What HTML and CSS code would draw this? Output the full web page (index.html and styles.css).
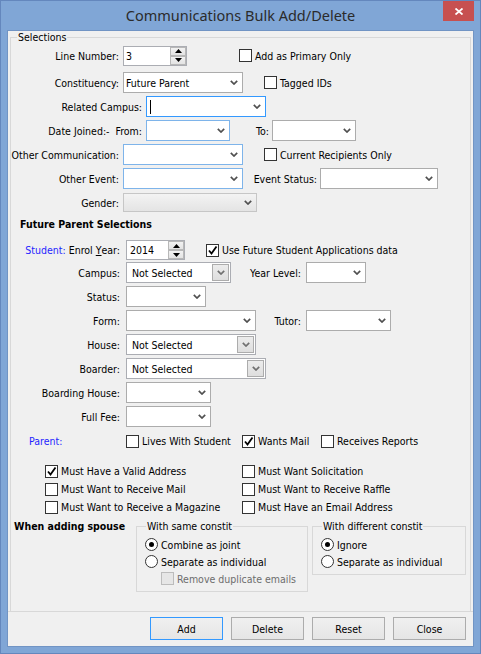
FILE: index.html
```html
<!DOCTYPE html>
<html>
<head>
<meta charset="utf-8">
<link rel="stylesheet" href="styles.css">
</head>
<body>
<div class="window">
  <div class="titlebar">
    <span></span>
    <span class="title">Communications Bulk Add/Delete</span>
    <div class="closecell"><div class="close"><svg width="8" height="7" viewBox="0 0 8 7"><path d="M0.5 0.5 L7.5 6.5 M7.5 0.5 L0.5 6.5" stroke="#fff" stroke-width="1.8" fill="none"/></svg></div></div>
  </div>
  <div class="client">
    <fieldset class="main">
      <legend>Selections</legend>

      <div class="row r1">
        <span class="lbl w108">Line Number:</span>
        <div class="spin w64"><span class="val">3</span><div class="spinbtns"><span class="sb"><svg width="7" height="4" viewBox="0 0 7 4"><path d="M3.5 0 L7 4 L0 4Z"/></svg></span><span class="sb"><svg width="7" height="4" viewBox="0 0 7 4"><path d="M0 0 L7 0 L3.5 4Z"/></svg></span></div></div>
        <span class="chk ml52"><span class="box"></span>Add as Primary Only</span>
      </div>

      <div class="row r2">
        <span class="lbl w108">Constituency:</span>
        <div class="sel w120"><span class="val">Future Parent</span><svg class="chev" width="8" height="5" viewBox="0 0 8 5"><path d="M0.8 0.8 L4 4 L7.2 0.8"/></svg></div>
        <span class="chk ml21"><span class="box"></span>Tagged IDs</span>
      </div>

      <div class="row">
        <span class="lbl w131">Related Campus:</span>
        <div class="sel focus w120"><span class="caret"></span><svg class="chev" width="8" height="5" viewBox="0 0 8 5"><path d="M0.8 0.8 L4 4 L7.2 0.8"/></svg></div>
      </div>

      <div class="row">
        <span class="lbl w131">Date Joined:-&nbsp;&nbsp;From:</span>
        <div class="sel blue w84"><svg class="chev" width="8" height="5" viewBox="0 0 8 5"><path d="M0.8 0.8 L4 4 L7.2 0.8"/></svg></div>
        <span class="lbl w43">To:</span>
        <div class="sel w84"><svg class="chev" width="8" height="5" viewBox="0 0 8 5"><path d="M0.8 0.8 L4 4 L7.2 0.8"/></svg></div>
      </div>

      <div class="row">
        <span class="lbl w108">Other Communication:</span>
        <div class="sel blue w120"><svg class="chev" width="8" height="5" viewBox="0 0 8 5"><path d="M0.8 0.8 L4 4 L7.2 0.8"/></svg></div>
        <span class="chk ml21"><span class="box"></span>Current Recipients Only</span>
      </div>

      <div class="row">
        <span class="lbl w108">Other Event:</span>
        <div class="sel blue w120"><svg class="chev" width="8" height="5" viewBox="0 0 8 5"><path d="M0.8 0.8 L4 4 L7.2 0.8"/></svg></div>
        <span class="lbl w75">Event Status:</span>
        <div class="sel w118"><svg class="chev" width="8" height="5" viewBox="0 0 8 5"><path d="M0.8 0.8 L4 4 L7.2 0.8"/></svg></div>
      </div>

      <div class="row">
        <span class="lbl w108">Gender:</span>
        <div class="sel disabled w134"><svg class="chev" width="8" height="5" viewBox="0 0 8 5"><path d="M0.8 0.8 L4 4 L7.2 0.8"/></svg></div>
      </div>

      <div class="heading">Future Parent Selections</div>

      <div class="row r8">
        <span class="lbl w109"><span class="blue-text">Student:</span>&nbsp;Enrol&nbsp;<u>Y</u>ear:</span>
        <div class="spin w59 c2"><span class="val">2014</span><div class="spinbtns"><span class="sb"><svg width="7" height="4" viewBox="0 0 7 4"><path d="M3.5 0 L7 4 L0 4Z"/></svg></span><span class="sb"><svg width="7" height="4" viewBox="0 0 7 4"><path d="M0 0 L7 0 L3.5 4Z"/></svg></span></div></div>
        <span class="chk ml21"><span class="box"><svg width="11" height="11" viewBox="0 0 11 11"><path d="M2 5.5 L4.5 8.5 L9.5 1.5" stroke="#000" stroke-width="1.8" fill="none"/></svg></span>Use Future Student Applications data</span>
      </div>

      <div class="row r9">
        <span class="lbl w109">Campus:</span>
        <div class="csel w105 c2"><span class="val">Not Selected</span><span class="cbtn"><svg class="chev" width="8" height="5" viewBox="0 0 8 5"><path d="M0.8 0.8 L4 4 L7.2 0.8"/></svg></span></div>
        <span class="lbl w69">Year Level:</span>
        <div class="sel w60 c2"><svg class="chev" width="8" height="5" viewBox="0 0 8 5"><path d="M0.8 0.8 L4 4 L7.2 0.8"/></svg></div>
      </div>

      <div class="row">
        <span class="lbl w109">Status:</span>
        <div class="sel w80 c2"><svg class="chev" width="8" height="5" viewBox="0 0 8 5"><path d="M0.8 0.8 L4 4 L7.2 0.8"/></svg></div>
      </div>

      <div class="row">
        <span class="lbl w109">Form:</span>
        <div class="sel w130 c2"><svg class="chev" width="8" height="5" viewBox="0 0 8 5"><path d="M0.8 0.8 L4 4 L7.2 0.8"/></svg></div>
        <span class="lbl w44">Tutor:</span>
        <div class="sel w85 c2"><svg class="chev" width="8" height="5" viewBox="0 0 8 5"><path d="M0.8 0.8 L4 4 L7.2 0.8"/></svg></div>
      </div>

      <div class="row">
        <span class="lbl w109">House:</span>
        <div class="csel w130 c2"><span class="val">Not Selected</span><span class="cbtn"><svg class="chev" width="8" height="5" viewBox="0 0 8 5"><path d="M0.8 0.8 L4 4 L7.2 0.8"/></svg></span></div>
      </div>

      <div class="row">
        <span class="lbl w109">Boarder:</span>
        <div class="csel w140 c2"><span class="val">Not Selected</span><span class="cbtn"><svg class="chev" width="8" height="5" viewBox="0 0 8 5"><path d="M0.8 0.8 L4 4 L7.2 0.8"/></svg></span></div>
      </div>

      <div class="row">
        <span class="lbl w109">Boarding House:</span>
        <div class="sel w85 c2"><svg class="chev" width="8" height="5" viewBox="0 0 8 5"><path d="M0.8 0.8 L4 4 L7.2 0.8"/></svg></div>
      </div>

      <div class="row">
        <span class="lbl w109">Full Fee:</span>
        <div class="sel w85 c2"><svg class="chev" width="8" height="5" viewBox="0 0 8 5"><path d="M0.8 0.8 L4 4 L7.2 0.8"/></svg></div>
      </div>

      <div class="row parent">
        <span class="plabel blue-text">Parent:</span>
        <span class="chk pw116"><span class="box"></span>Lives With Student</span>
        <span class="chk pw79"><span class="box"><svg width="11" height="11" viewBox="0 0 11 11"><path d="M2 5.5 L4.5 8.5 L9.5 1.5" stroke="#000" stroke-width="1.8" fill="none"/></svg></span>Wants Mail</span>
        <span class="chk"><span class="box"></span>Receives Reports</span>
      </div>

      <div class="must">
        <span class="chk"><span class="box"><svg width="11" height="11" viewBox="0 0 11 11"><path d="M2 5.5 L4.5 8.5 L9.5 1.5" stroke="#000" stroke-width="1.8" fill="none"/></svg></span>Must Have a Valid Address</span>
        <span class="chk"><span class="box"></span>Must Want Solicitation</span>
        <span class="chk"><span class="box"></span>Must Want to Receive Mail</span>
        <span class="chk"><span class="box"></span>Must Want to Receive Raffle</span>
        <span class="chk"><span class="box"></span>Must Want to Receive a Magazine</span>
        <span class="chk"><span class="box"></span>Must Have an Email Address</span>
      </div>

      <div class="spouse">
        <span class="sp-label">When adding spouse</span>
        <fieldset class="sub g1">
          <legend>With same constit</legend>
          <div class="rad first"><span class="radio on"></span>Combine as joint</div>
          <div class="rad"><span class="radio"></span>Separate as individual</div>
          <div class="rad indent"><span class="chk dis"><span class="box"></span>Remove duplicate emails</span></div>
        </fieldset>
        <fieldset class="sub g2">
          <legend>With different constit</legend>
          <div class="rad first"><span class="radio on"></span>Ignore</div>
          <div class="rad"><span class="radio"></span>Separate as individual</div>
        </fieldset>
      </div>
    </fieldset>
    <div class="sep"></div>
    <div class="buttons">
      <button class="btn default">Add</button>
      <button class="btn">Delete</button>
      <button class="btn">Reset</button>
      <button class="btn">Close</button>
    </div>
  </div>
</div>
</body>
</html>
```

FILE: styles.css
```css
html, body {
  margin: 0;
  padding: 0;
  background: #80a6d6;
}
body {
  font-family: "DejaVu Sans Condensed", "Liberation Sans", sans-serif;
  font-size: 10.5px;
  color: #000;
}
.window {
  width: 481px;
  height: 654px;
  box-sizing: border-box;
  background: #80a6d6;
  border: 1px solid #6487bd;
  padding: 0 6px 6px 6px;
  display: flex;
  flex-direction: column;
}
.titlebar {
  height: 29px;
  display: grid;
  grid-template-columns: 1fr auto 1fr;
  align-items: start;
}
.title {
  font-family: "Noto Sans", "Open Sans", sans-serif;
  font-size: 14.5px;
  color: #2b2b2b;
  line-height: 28px;
}
.closecell {
  display: flex;
  justify-content: flex-end;
}
.close {
  width: 31px;
  height: 20px;
  background: #c75050;
  display: flex;
  align-items: center;
  justify-content: center;
}
.client {
  flex: 1;
  background: #f0f0f0;
  border: 1px solid #7194c4;
  display: flex;
  flex-direction: column;
}
fieldset {
  margin: 0;
  padding: 0;
  min-width: 0;
  border: 1px solid #d8d8d8;
}
legend {
  padding: 0 1px;
  line-height: 13px;
}
.main {
  height: 580px;
  box-sizing: border-box;
  margin: 0 2px;
  border-bottom: none;
}
.main > legend {
  margin-left: 6px;
}
.row {
  display: flex;
  align-items: center;
  height: 21px;
  margin-top: 3px;
  white-space: nowrap;
}
.row.r1 { margin-top: 1px; }
.row.r2 { margin-top: 6px; }
.row.r8 { margin-top: 9px; height: 20px; }
.row.r9 { margin-top: 2px; }
.row.parent { margin-top: 4px; height: 20px; }

.lbl {
  display: flex;
  justify-content: flex-end;
  flex: none;
  margin-right: 4px;
  white-space: nowrap;
}
.w108 { width: 108px; }
.w109 { width: 109px; margin-right: 6px; }
.w131 { width: 131px; }
.w43 { width: 39px; margin-right: 3px; }
.w75 { width: 74px; margin-right: 3px; }
.w69 { width: 70px; margin-right: 5px; }
.w44 { width: 45px; margin-right: 5px; }

.ml52 { margin-left: 52px; }
.ml21 { margin-left: 21px; }

.sel, .csel, .spin {
  flex: none;
  box-sizing: border-box;
  height: 21px;
  background: #fff;
  border: 1px solid #acacac;
  display: flex;
  align-items: center;
}
.sel { padding: 0 4px 0 2px; }
.sel .chev { margin-left: auto; }
.chev path {
  fill: none;
  stroke: #505050;
  stroke-width: 1.7;
}
.sel.blue { border-color: #7eb4ea; }
.sel.focus { border-color: #3399ff; }
.sel.disabled {
  height: 19px;
  border-color: #c6c6c6;
  background: linear-gradient(#f3f3f3, #e4e4e4);
}
.caret {
  width: 1px;
  height: 14px;
  background: #000;
  margin-left: 1px;
}
.w120 { width: 120px; }
.w84 { width: 84px; }
.w118 { width: 118px; }
.w134 { width: 134px; }
.w105 { width: 105px; }
.w60 { width: 60px; }
.w80 { width: 80px; }
.w130 { width: 130px; }
.w85 { width: 85px; }
.w140 { width: 140px; }
.w64 { width: 64px; }
.w59 { width: 59px; }

.csel {
  border-color: #abadb3;
  padding: 1px 1px 1px 5px;
  align-items: stretch;
}
.csel .val {
  align-self: center;
}
.cbtn {
  margin-left: auto;
  width: 17px;
  box-sizing: border-box;
  border: 1px solid #acacac;
  background: linear-gradient(#ececec, #dedede);
  display: flex;
  align-items: center;
  justify-content: center;
}
.cbtn .chev path { stroke: #707070; }

.spin {
  height: 20px;
  border-color: #abadb3;
  padding: 0 0 0 2px;
  align-items: stretch;
}
.spin .val { align-self: center; }
.spin.c2 .val { padding-left: 1px; }
.spinbtns {
  margin-left: auto;
  width: 16px;
  display: flex;
  flex-direction: column;
}
.sb {
  flex: 1;
  box-sizing: border-box;
  border: 1px solid #b8b8b8;
  background: linear-gradient(#f2f2f2, #e3e3e3);
  display: flex;
  align-items: center;
  justify-content: center;
}
.sb svg path { fill: #000; }

.chk {
  display: inline-flex;
  align-items: center;
  white-space: nowrap;
  flex: none;
}
.box {
  width: 13px;
  height: 13px;
  box-sizing: border-box;
  border: 1px solid #333;
  background: #fff;
  margin-right: 3px;
  display: flex;
  align-items: center;
  justify-content: center;
}
.chk.dis { color: #6d6d6d; }
.chk.dis .box {
  border-color: #bcbcbc;
  background: #e6e6e6;
}

.heading {
  font-weight: bold;
  margin: 4px 0 0 9px;
  line-height: 14px;
}
.blue-text { color: #1f1fff; }
.plabel {
  width: 97px;
  padding-left: 18px;
  flex: none;
}
.pw116 { width: 116px; }
.pw79 { width: 79px; }

.must {
  margin: 11px 0 0 34px;
  display: grid;
  grid-template-columns: 197px auto;
  grid-auto-rows: 18px;
  align-items: center;
}

.spouse {
  margin-top: 3px;
  display: flex;
  align-items: flex-start;
}
.sp-label {
  width: 122px;
  padding-left: 3px;
  font-weight: bold;
  line-height: 14px;
  flex: none;
}
.sub {
  box-sizing: border-box;
  padding: 0 0 4px 8px;
}
.sub legend {
  margin-left: 1px;
  line-height: 14px;
}
.g1 { width: 172px; }
.g2 { width: 154px; margin-left: 4px; }
.rad {
  height: 17px;
  display: flex;
  align-items: center;
  white-space: nowrap;
}
.rad.first { margin-top: 3px; }
.rad.indent { padding-left: 16px; }
.radio {
  width: 13px;
  height: 13px;
  box-sizing: border-box;
  border: 1px solid #333;
  border-radius: 50%;
  background: #fff;
  margin-right: 3px;
  display: flex;
  align-items: center;
  justify-content: center;
}
.radio.on::after {
  content: "";
  width: 5px;
  height: 5px;
  border-radius: 50%;
  background: #000;
}

.sep {
  height: 1px;
  background: #d8d8d8;
}
.buttons {
  display: flex;
  justify-content: flex-end;
  gap: 8px;
  margin-top: 5px;
  padding-right: 7px;
}
.btn {
  width: 73px;
  height: 23px;
  box-sizing: border-box;
  border: 1px solid #acacac;
  background: linear-gradient(#f0f0f0, #e5e5e5);
  font-family: inherit;
  font-size: inherit;
  color: #000;
  padding: 0;
}
.btn.default {
  border-color: #3399ff;
}
```
